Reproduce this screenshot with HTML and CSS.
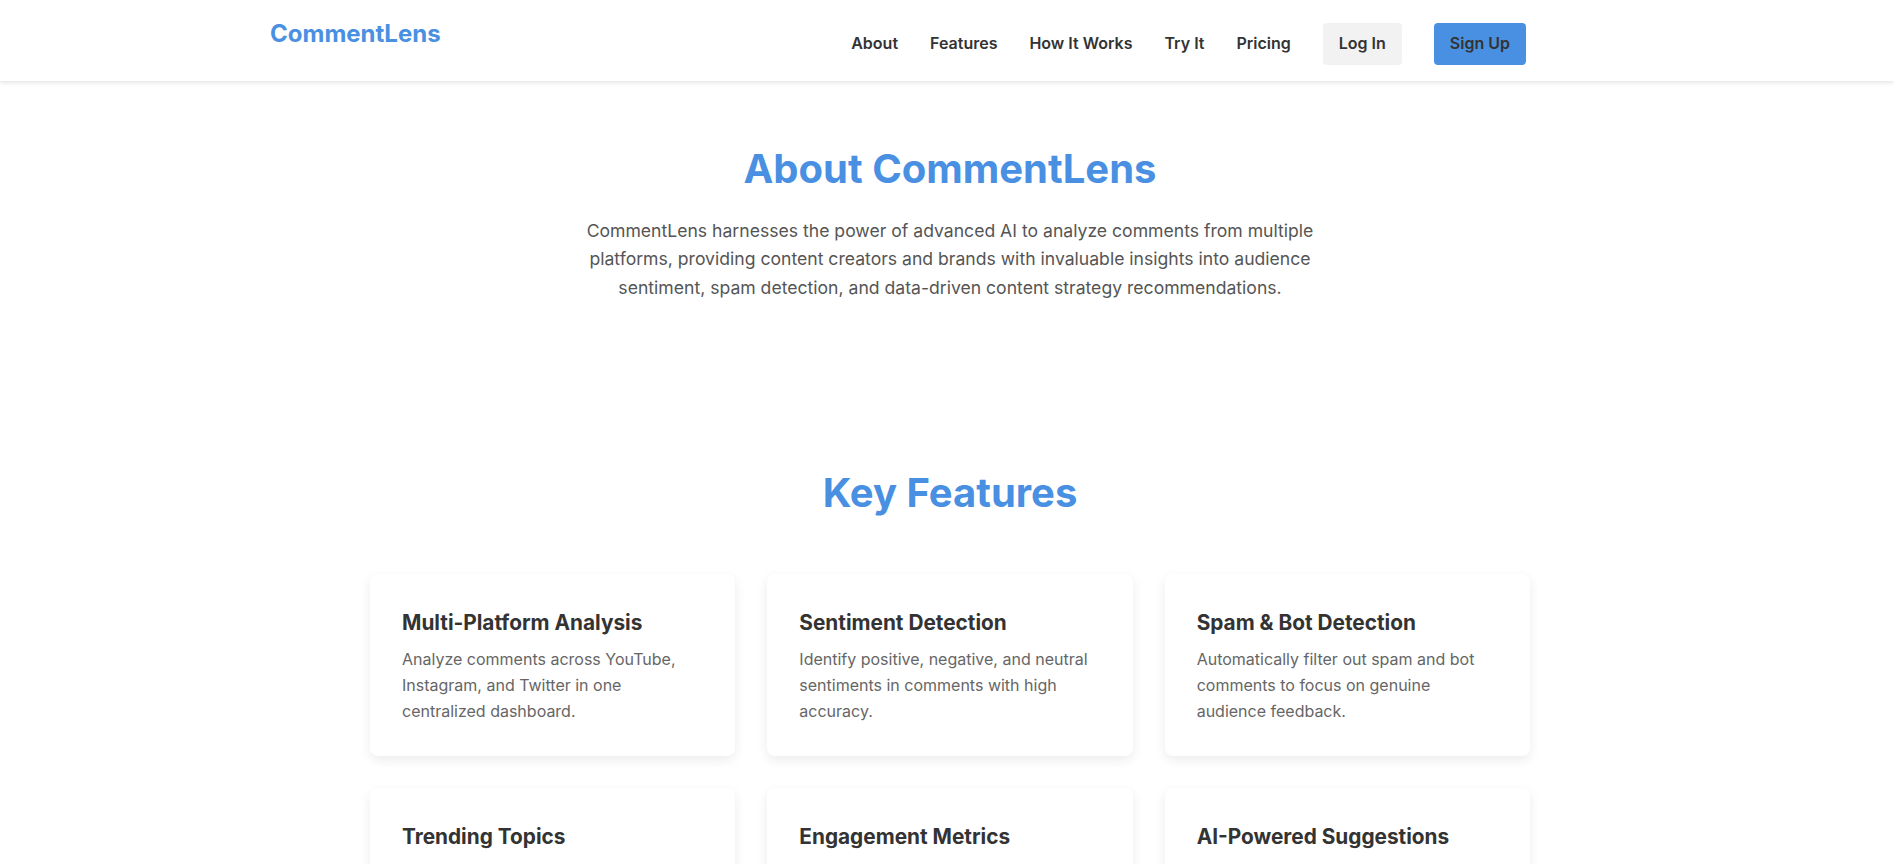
FILE: index.html
```html
<!DOCTYPE html>
<html lang="en">
<head>
<meta charset="utf-8">
<title>CommentLens</title>
<link rel="stylesheet" href="styles.css">
</head>
<body>
<header class="site-header">
  <div class="header-inner">
    <div class="logo">CommentLens</div>
    <nav class="nav">
      <a class="nav-link" href="#about">About</a>
      <a class="nav-link" href="#features">Features</a>
      <a class="nav-link" href="#how">How It Works</a>
      <a class="nav-link" href="#try">Try It</a>
      <a class="nav-link" href="#pricing">Pricing</a>
      <a class="btn btn-light" href="#login">Log In</a>
      <a class="btn btn-primary" href="#signup">Sign Up</a>
    </nav>
  </div>
</header>

<main class="main">
  <section class="about" id="about">
    <h2 class="section-title">About CommentLens</h2>
    <p class="about-text">CommentLens harnesses the power of advanced AI to analyze comments from multiple platforms, providing content creators and brands with invaluable insights into audience sentiment, spam detection, and data-driven content strategy recommendations.</p>
  </section>

  <section class="features" id="features">
    <h2 class="section-title features-title">Key Features</h2>
    <div class="feature-grid">
      <div class="card">
        <h3 class="card-title">Multi-Platform Analysis</h3>
        <p class="card-text">Analyze comments across YouTube, Instagram, and Twitter in one centralized dashboard.</p>
      </div>
      <div class="card">
        <h3 class="card-title">Sentiment Detection</h3>
        <p class="card-text">Identify positive, negative, and neutral sentiments in comments with high accuracy.</p>
      </div>
      <div class="card">
        <h3 class="card-title">Spam &amp; Bot Detection</h3>
        <p class="card-text">Automatically filter out spam and bot comments to focus on genuine audience feedback.</p>
      </div>
      <div class="card">
        <h3 class="card-title">Trending Topics</h3>
        <p class="card-text">Discover the topics and keywords your audience talks about most across all platforms.</p>
      </div>
      <div class="card">
        <h3 class="card-title">Engagement Metrics</h3>
        <p class="card-text">Track likes, replies, and comment activity to measure how your content performs.</p>
      </div>
      <div class="card">
        <h3 class="card-title">AI-Powered Suggestions</h3>
        <p class="card-text">Get data-driven content strategy recommendations based on audience feedback.</p>
      </div>
    </div>
  </section>
</main>
</body>
</html>
```

FILE: styles.css
```css
* {
  box-sizing: border-box;
}

body {
  margin: 0;
  font-family: Inter, "Noto Sans", "Liberation Sans", sans-serif;
  line-height: 1.6;
  color: #333;
  background: #fff;
}

a {
  text-decoration: none;
  color: inherit;
}

.site-header {
  background: #fff;
  box-shadow: 0 2px 4px rgba(0, 0, 0, 0.1);
  padding: 15px 0 16px;
}

.header-inner {
  max-width: 1360px;
  margin: 0 auto;
  padding-left: 3px;
  padding-right: 101px;
  display: flex;
  justify-content: space-between;
  align-items: flex-start;
}

.logo {
  font-size: 24px;
  font-weight: 700;
  color: #4a90e2;
  line-height: 1.6;
}

.nav {
  display: flex;
  align-items: center;
  gap: 32px;
  margin-top: 8px;
}

.nav-link {
  font-size: 16px;
  font-weight: 600;
  color: #333;
}

.btn {
  font-size: 16px;
  font-weight: 600;
  padding: 8px 16px;
  border-radius: 4px;
  color: #333;
}

.btn-light {
  background: #f2f2f2;
}

.btn-primary {
  background: #4a90e2;
}

.main {
  padding-left: 6px;
}

.about {
  padding: 64px 0 0;
  text-align: center;
}

.section-title {
  margin: 0;
  font-size: 40px;
  font-weight: 700;
  line-height: 1.2;
  color: #4a90e2;
  text-align: center;
}

.about-text {
  max-width: 800px;
  margin: 24px auto 0;
  font-size: 17.6px;
  line-height: 1.64;
  color: #555;
}

.features {
  padding-top: 166px;
}

.features-title {
  margin-bottom: 57px;
}

.feature-grid {
  width: 1160px;
  margin: 0 auto;
  display: grid;
  grid-template-columns: repeat(3, 1fr);
  gap: 32px;
}

.card {
  background: #fff;
  border-radius: 8px;
  box-shadow: 0 4px 12px rgba(0, 0, 0, 0.08);
  padding: 32px;
}

.card-title {
  margin: 0 0 8px;
  font-size: 20.8px;
  font-weight: 700;
  line-height: 1.6;
  color: #333;
}

.card-text {
  margin: 0;
  font-size: 16px;
  color: #666;
}
```
